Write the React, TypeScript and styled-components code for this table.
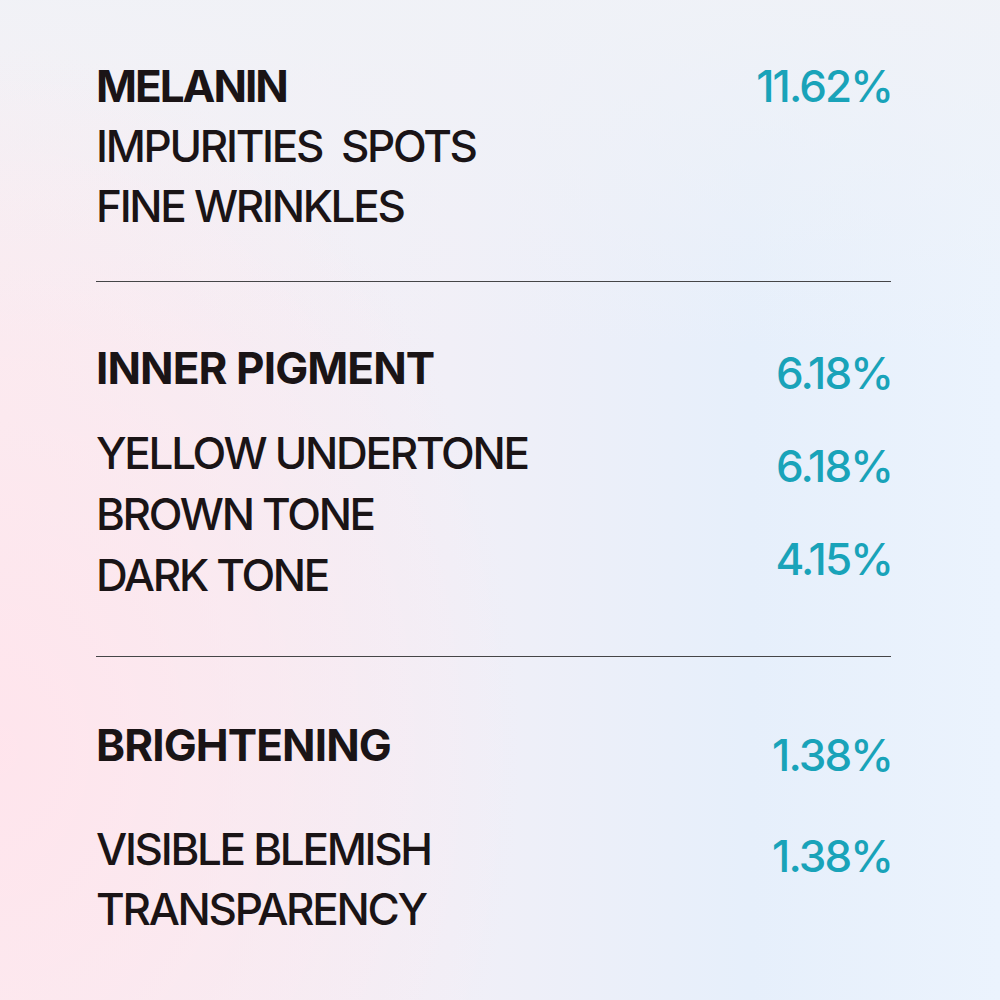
import React from 'react';
import styled, { createGlobalStyle } from 'styled-components';

const GlobalStyle = createGlobalStyle`
  html, body {
    margin: 0;
    padding: 0;
  }
  body {
    font-family: Inter, "Noto Sans", "Liberation Sans", sans-serif;
  }
`;

const Page = styled.div`
  width: 1000px;
  height: 1000px;
  box-sizing: border-box;
  padding: 56px 109px 0 96px;
  overflow: hidden;
  background:
    radial-gradient(ellipse 520px 700px at 0% 75%, rgba(255, 228, 236, 0.95), rgba(255, 228, 236, 0) 100%),
    linear-gradient(180deg, rgba(240, 242, 247, 0.9) 0%, rgba(240, 242, 247, 0) 35%),
    linear-gradient(90deg, #f9eef2 0%, #f1eff7 45%, #e6effb 75%, #ebf3fd 100%);
`;

const Section = styled.section<{ $top: number }>`
  display: flex;
  justify-content: space-between;
  margin-top: ${(p) => p.$top}px;
`;

const Labels = styled.div<{ $gap: number }>`
  display: flex;
  flex-direction: column;
  & > *:nth-child(2) {
    margin-top: ${(p) => p.$gap}px;
  }
`;

const Values = styled.div`
  display: flex;
  flex-direction: column;
  align-items: flex-end;
`;

const Heading = styled.div<{ $ls?: number }>`
  font-size: 44px;
  line-height: 60px;
  font-weight: 700;
  letter-spacing: ${(p) => p.$ls ?? -0.9}px;
  color: #1a1416;
  white-space: pre;
`;

const Item = styled.div<{ $lh?: number }>`
  font-size: 44px;
  line-height: ${(p) => p.$lh ?? 60}px;
  font-weight: 500;
  letter-spacing: -2.3px;
  color: #1a1416;
  white-space: pre;
`;

const Value = styled.div<{ $top: number }>`
  font-size: 44px;
  line-height: 60px;
  font-weight: 500;
  letter-spacing: -1.9px;
  margin-right: -1px;
  color: #19a3b9;
  margin-top: ${(p) => p.$top}px;
`;

const Divider = styled.hr<{ $top: number }>`
  margin: ${(p) => p.$top}px 0 0;
  border: none;
  height: 1px;
  background: #454547;
`;

export default function App() {
  return (
    <>
      <GlobalStyle />
      <Page>
        <Section $top={0}>
          <Labels $gap={0}>
            <Heading $ls={-2}>MELANIN</Heading>
            <Item>IMPURITIES  SPOTS</Item>
            <Item>FINE WRINKLES</Item>
          </Labels>
          <Values>
            <Value $top={0}>11.62%</Value>
          </Values>
        </Section>

        <Divider $top={45} />

        <Section $top={56}>
          <Labels $gap={25}>
            <Heading>INNER PIGMENT</Heading>
            <Item $lh={61}>YELLOW UNDERTONE</Item>
            <Item $lh={61}>BROWN TONE</Item>
            <Item $lh={61}>DARK TONE</Item>
          </Labels>
          <Values>
            <Value $top={5}>6.18%</Value>
            <Value $top={33}>6.18%</Value>
            <Value $top={33}>4.15%</Value>
          </Values>
        </Section>

        <Divider $top={50} />

        <Section $top={58}>
          <Labels $gap={44}>
            <Heading>BRIGHTENING</Heading>
            <Item>VISIBLE BLEMISH</Item>
            <Item>TRANSPARENCY</Item>
          </Labels>
          <Values>
            <Value $top={10}>1.38%</Value>
            <Value $top={41}>1.38%</Value>
          </Values>
        </Section>
      </Page>
    </>
  );
}
